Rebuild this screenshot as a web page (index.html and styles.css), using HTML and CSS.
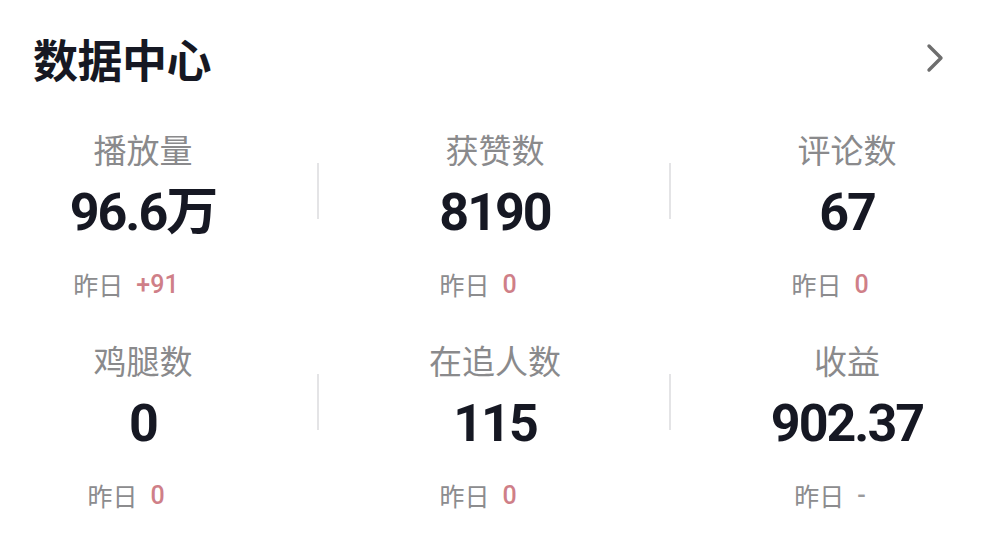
FILE: index.html
```html
<!DOCTYPE html>
<html lang="zh-CN">
<head>
<meta charset="utf-8">
<title>数据中心</title>
<link rel="stylesheet" href="styles.css">
</head>
<body>
<div class="page">
  <header class="header">
    <h1 class="title">数据中心</h1>
    <svg class="chevron" width="20" height="30" viewBox="0 0 20 30" aria-hidden="true">
      <path d="M4 3 L16 15 L4 27" fill="none" stroke="#6e6e6e" stroke-width="3.4" stroke-linecap="round" stroke-linejoin="round"/>
    </svg>
  </header>
  <section class="stats">
    <div class="cell">
      <div class="label">播放量</div>
      <div class="value">96.6万</div>
      <div class="yday">昨日<span class="delta">+91</span></div>
    </div>
    <div class="cell divided">
      <div class="label">获赞数</div>
      <div class="value">8190</div>
      <div class="yday">昨日<span class="delta">0</span></div>
    </div>
    <div class="cell divided">
      <div class="label">评论数</div>
      <div class="value">67</div>
      <div class="yday">昨日<span class="delta">0</span></div>
    </div>
    <div class="cell">
      <div class="label">鸡腿数</div>
      <div class="value">0</div>
      <div class="yday">昨日<span class="delta">0</span></div>
    </div>
    <div class="cell divided">
      <div class="label">在追人数</div>
      <div class="value">115</div>
      <div class="yday">昨日<span class="delta">0</span></div>
    </div>
    <div class="cell divided">
      <div class="label">收益</div>
      <div class="value">902.37</div>
      <div class="yday">昨日<span class="delta dash">-</span></div>
    </div>
  </section>
</div>
</body>
</html>
```

FILE: styles.css
```css
* { box-sizing: border-box; }
html, body {
  margin: 0;
  padding: 0;
  background: #ffffff;
}
body {
  width: 990px;
  height: 557px;
  overflow: hidden;
  font-family: "Noto Sans CJK SC", "Noto Sans", sans-serif;
}
.page {
  width: 990px;
}
.header {
  display: flex;
  justify-content: space-between;
  align-items: center;
  padding: 36px 45px 0 33px;
}
.title {
  margin: 0;
  font-size: 45px;
  line-height: 45px;
  font-weight: 700;
  color: #161823;
  letter-spacing: -0.5px;
}
.chevron {
  display: block;
  margin-top: -2px;
}
.stats {
  display: grid;
  grid-template-columns: repeat(3, 352px);
  row-gap: 47px;
  margin-top: 52px;
  margin-left: -33px;
}
.cell {
  position: relative;
  display: flex;
  flex-direction: column;
  align-items: center;
}
.divided::before {
  content: "";
  position: absolute;
  left: -2px;
  top: 30px;
  width: 1.5px;
  height: 56px;
  background: #e4e4e6;
}
.label {
  font-size: 33px;
  line-height: 33px;
  color: #8a8a8c;
  font-weight: 400;
}
.value {
  margin-top: 21px;
  font-family: Roboto, "Noto Sans CJK SC", sans-serif;
  font-size: 52px;
  line-height: 52px;
  font-weight: 700;
  color: #161823;
  letter-spacing: -2px;
}
.yday {
  margin-top: 33px;
  padding-right: 34px;
  font-size: 25px;
  line-height: 25px;
  color: #8c8c8e;
  display: flex;
  align-items: center;
}
.delta {
  margin-left: 13px;
  font-family: Roboto, "Noto Sans", sans-serif;
  font-size: 25px;
  color: #cf7f88;
  font-weight: 500;
}
.delta.dash {
  color: #9a9a9c;
}
```
